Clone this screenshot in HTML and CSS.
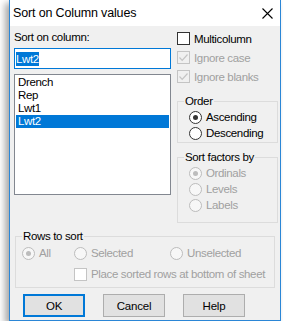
FILE: index.html
```html
<!DOCTYPE html>
<html lang="en">
<head>
    <meta charset="UTF-8">
    <title>Sort on Column values</title>
    <link rel="stylesheet" href="styles.css">
</head>
<body>
    <div class="win">
        <div class="tit">
            <span>Sort on Column values</span>
            <svg class="cls" width="11" height="11" viewBox="0 0 11 11"><path d="M0.5 0.5 L10.5 10.5 M10.5 0.5 L0.5 10.5" stroke="#000" stroke-width="1.1" fill="none"/></svg>
        </div>

        <div class="cuerpo">
            <div class="arriba">
                <div class="izq">
                    <div class="lbl">Sort on column:</div>
                    <div class="edit"><span class="sel">Lwt2</span></div>
                    <div class="lista">
                        <div class="it">Drench</div>
                        <div class="it">Rep</div>
                        <div class="it">Lwt1</div>
                        <div class="it on">Lwt2</div>
                    </div>
                </div>

                <div class="der">
                    <div class="chk"><span class="caja"></span>Multicolumn</div>
                    <div class="chk off"><span class="caja"><svg width="11" height="11" viewBox="0 0 11 11"><path d="M1.5 5.5 L4.2 8.3 L9.5 2.5" stroke="#c4c4c4" stroke-width="1.2" fill="none"/></svg></span>Ignore case</div>
                    <div class="chk off"><span class="caja"><svg width="11" height="11" viewBox="0 0 11 11"><path d="M1.5 5.5 L4.2 8.3 L9.5 2.5" stroke="#c4c4c4" stroke-width="1.2" fill="none"/></svg></span>Ignore blanks</div>

                    <fieldset class="grp orden">
                        <legend>Order</legend>
                        <div class="rad"><span class="circ sel"></span>Ascending</div>
                        <div class="rad"><span class="circ"></span>Descending</div>
                    </fieldset>

                    <fieldset class="grp fact">
                        <legend>Sort factors by</legend>
                        <div class="rad off"><span class="circ sel"></span>Ordinals</div>
                        <div class="rad off"><span class="circ"></span>Levels</div>
                        <div class="rad off"><span class="circ"></span>Labels</div>
                    </fieldset>
                </div>
            </div>

            <fieldset class="grp filas">
                <legend>Rows to sort</legend>
                <div class="fila1">
                    <div class="rad off"><span class="circ sel"></span>All</div>
                    <div class="rad off"><span class="circ"></span>Selected</div>
                    <div class="rad off"><span class="circ"></span>Unselected</div>
                </div>
                <div class="chk off abajo"><span class="caja"></span>Place sorted rows at bottom of sheet</div>
            </fieldset>

            <div class="btns">
                <button class="def">OK</button>
                <button>Cancel</button>
                <button>Help</button>
            </div>
        </div>
    </div>
</body>
</html>
```

FILE: styles.css
```css
body {
    margin: 0;
    background: #fff;
    font-family: "Liberation Sans", Arial, sans-serif;
    font-size: 11.5px;
    letter-spacing: -0.35px;
    color: #000;
}

.win {
    margin-left: 9px;
    margin-top: -1px;
    width: 270px;
    border: 1px solid #2b86d6;
    background: #f0f0f0;
    box-shadow: -4px 4px 7px rgba(0,0,0,0.35);
}

.tit {
    height: 26px;
    background: #fff;
    display: flex;
    align-items: center;
    justify-content: space-between;
    padding: 0 7px 0 3px;
    font-size: 12.5px;
    letter-spacing: -0.15px;
}

.cls {
    margin-top: 1px;
}

.cuerpo {
    padding: 0 0 3px 0;
}

.arriba {
    display: flex;
    gap: 6px;
    padding-left: 4px;
}

.izq {
    width: 157px;
}

.lbl {
    margin-top: 4px;
    line-height: 14px;
}

.edit {
    margin-top: 4px;
    height: 19px;
    border: 1px solid #0078d7;
    background: #fff;
    display: flex;
    align-items: center;
    padding-left: 1px;
}

.sel {
    background: #0078d7;
    color: #fff;
    line-height: 14px;
}

.lista {
    margin-top: 5px;
    height: 117px;
    border: 1px solid #828790;
    background: #fff;
    padding: 1px;
}

.it {
    height: 13px;
    line-height: 13px;
    padding-left: 2px;
}

.it.on {
    background: #0078d7;
    color: #fff;
}

.der {
    width: 101px;
    padding-top: 3px;
}

.chk {
    height: 19px;
    display: flex;
    align-items: center;
}

.caja {
    width: 11px;
    height: 11px;
    border: 1px solid #333;
    background: #fff;
    margin-right: 4px;
    display: flex;
}

.off {
    color: #a0a0a0;
}

.off .caja {
    border-color: #c4c4c4;
    background: #f0f0f0;
}

.abajo .caja {
    background: #fff;
}

.grp {
    margin: 0;
    border: 1px solid #dcdcdc;
    padding: 0 0 1px 6px;
    min-width: 0;
}

.grp legend {
    padding: 0 1px;
    line-height: 14px;
    color: #000;
}

.orden {
    margin-top: 8px;
}

.fact {
    margin-top: 7px;
    padding-bottom: 9px;
}

.rad {
    height: 16px;
    display: flex;
    align-items: center;
    margin-left: 5px;
}

.orden .rad:first-of-type,
.fact .rad:first-of-type {
    margin-top: 1px;
}

.circ {
    width: 11px;
    height: 11px;
    border: 1px solid #333;
    border-radius: 50%;
    background: #fff;
    margin-right: 4px;
    display: flex;
    align-items: center;
    justify-content: center;
}

.circ.sel::after {
    content: "";
    width: 5px;
    height: 5px;
    border-radius: 50%;
    background: #333;
}

.off .circ {
    border-color: #bcbcbc;
    background: #f7f7f7;
}

.off .circ.sel::after {
    background: #bcbcbc;
}

.filas {
    margin: 6px 5px 0 5px;
    padding-bottom: 5px;
}

.fila1 {
    display: grid;
    grid-template-columns: 52px 96px auto;
    margin-top: 2px;
}

.fila1 .rad {
    margin-left: 0;
}

.abajo {
    height: 16px;
    margin-left: 52px;
    margin-top: 5px;
}

.btns {
    display: flex;
    gap: 18px;
    padding-left: 13px;
    margin-top: 6px;
}

button {
    width: 62px;
    height: 23px;
    font-family: "Liberation Sans", Arial, sans-serif;
    font-size: 11.5px;
    letter-spacing: -0.2px;
    background: #e1e1e1;
    border: 1px solid #adadad;
    padding: 0;
    color: #000;
}

button.def {
    border: 2px solid #0078d7;
}
```
